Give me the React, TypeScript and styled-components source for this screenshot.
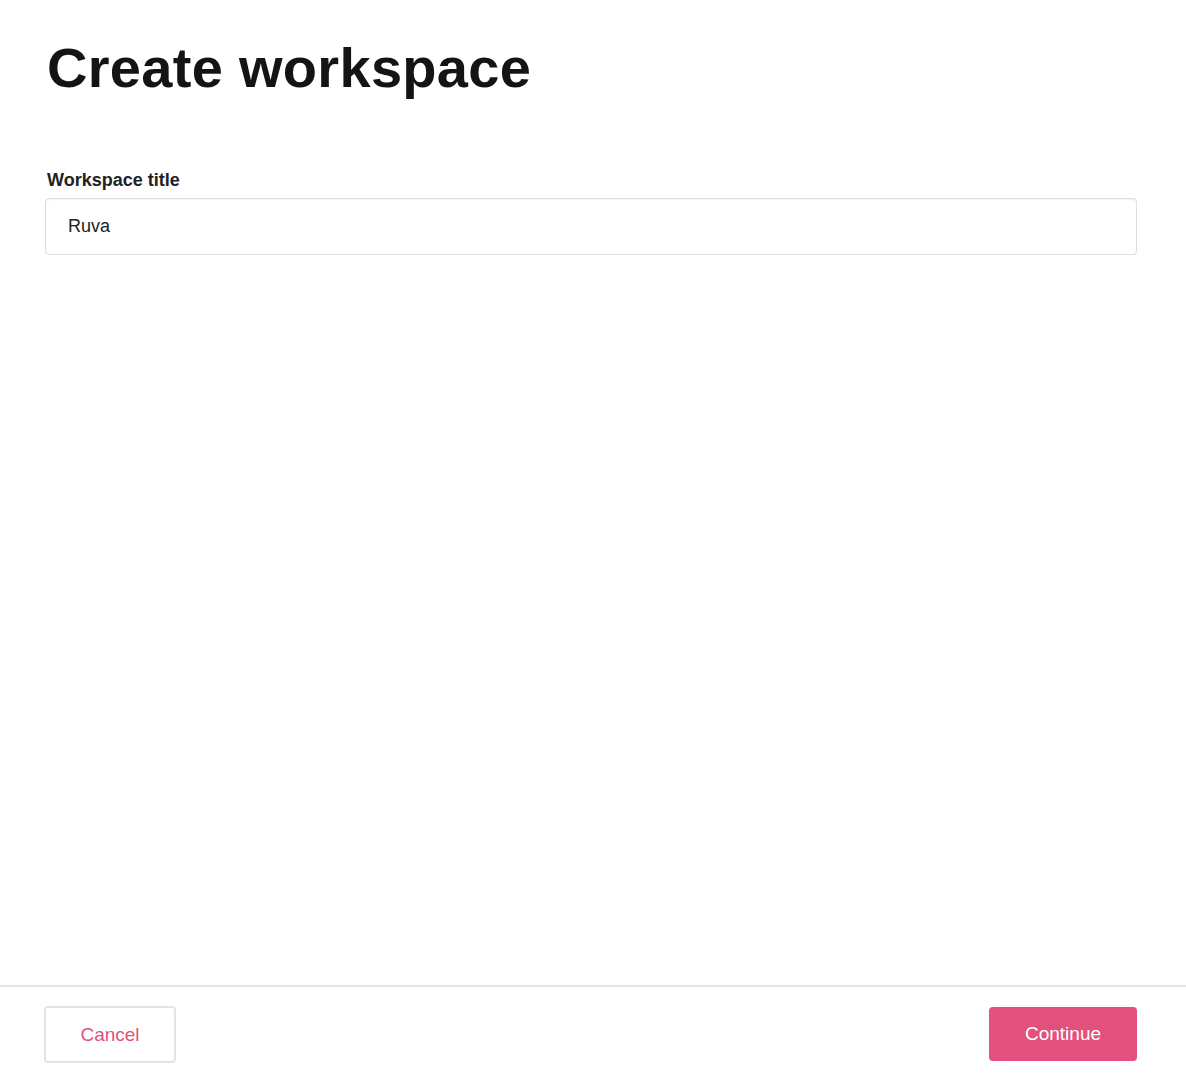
import React from "react";
import styled, { createGlobalStyle } from "styled-components";

const Global = createGlobalStyle`
  html, body { margin: 0; padding: 0; background: #fff; }
  body { font-family: "Liberation Sans", Arial, sans-serif; color: #161616; }
`;

const Page = styled.div`
  height: 1074px;
  display: flex;
  flex-direction: column;
`;
const Main = styled.main`
  flex: 1;
  padding: 30px 49px 0 45px;
`;
const Title = styled.h1`
  margin: 0 0 0 2px;
  font-size: 56px;
  line-height: 76px;
  font-weight: 700;
  letter-spacing: 0.3px;
  color: #141414;
`;
const Label = styled.label`
  display: block;
  margin: 62px 0 6px 2px;
  font-size: 18px;
  line-height: 24px;
  font-weight: 700;
  color: #222;
`;
const Input = styled.input`
  box-sizing: border-box;
  width: 100%;
  height: 57px;
  padding: 0 22px;
  border: 1px solid #dedede;
  border-radius: 4px;
  box-shadow: inset 0 1px 2px rgba(0,0,0,0.06);
  font-family: inherit;
  font-size: 18px;
  color: #222;
  outline: none;
`;
const Footer = styled.footer`
  border-top: 2px solid #e4e4e4;
  height: 89px;
  box-sizing: border-box;
  padding: 19px 49px 0 44px;
  display: flex;
  justify-content: space-between;
  align-items: flex-start;
`;
const Button = styled.button<{ $primary?: boolean }>`
  box-sizing: border-box;
  height: 56px;
  padding: 0 ${p => (p.$primary ? "32px" : "33px")};
  border-radius: 4px;
  font-family: inherit;
  font-size: 19px;
  cursor: pointer;
  border: ${p => (p.$primary ? "none" : "2px solid #e3e3e3")};
  background: ${p => (p.$primary ? "#e2517d" : "#fff")};
  color: ${p => (p.$primary ? "#fff" : "#e2517d")};
  margin-top: ${p => (p.$primary ? "1px" : "0")};
  height: ${p => (p.$primary ? "54px" : "57px")};
  min-width: ${p => (p.$primary ? "148px" : "132px")};
`;

export default function App() {
  return (
    <Page>
      <Global />
      <Main>
        <Title>Create workspace</Title>
        <Label htmlFor="ws">Workspace title</Label>
        <Input id="ws" defaultValue="Ruva" />
      </Main>
      <Footer>
        <Button>Cancel</Button>
        <Button $primary>Continue</Button>
      </Footer>
    </Page>
  );
}
